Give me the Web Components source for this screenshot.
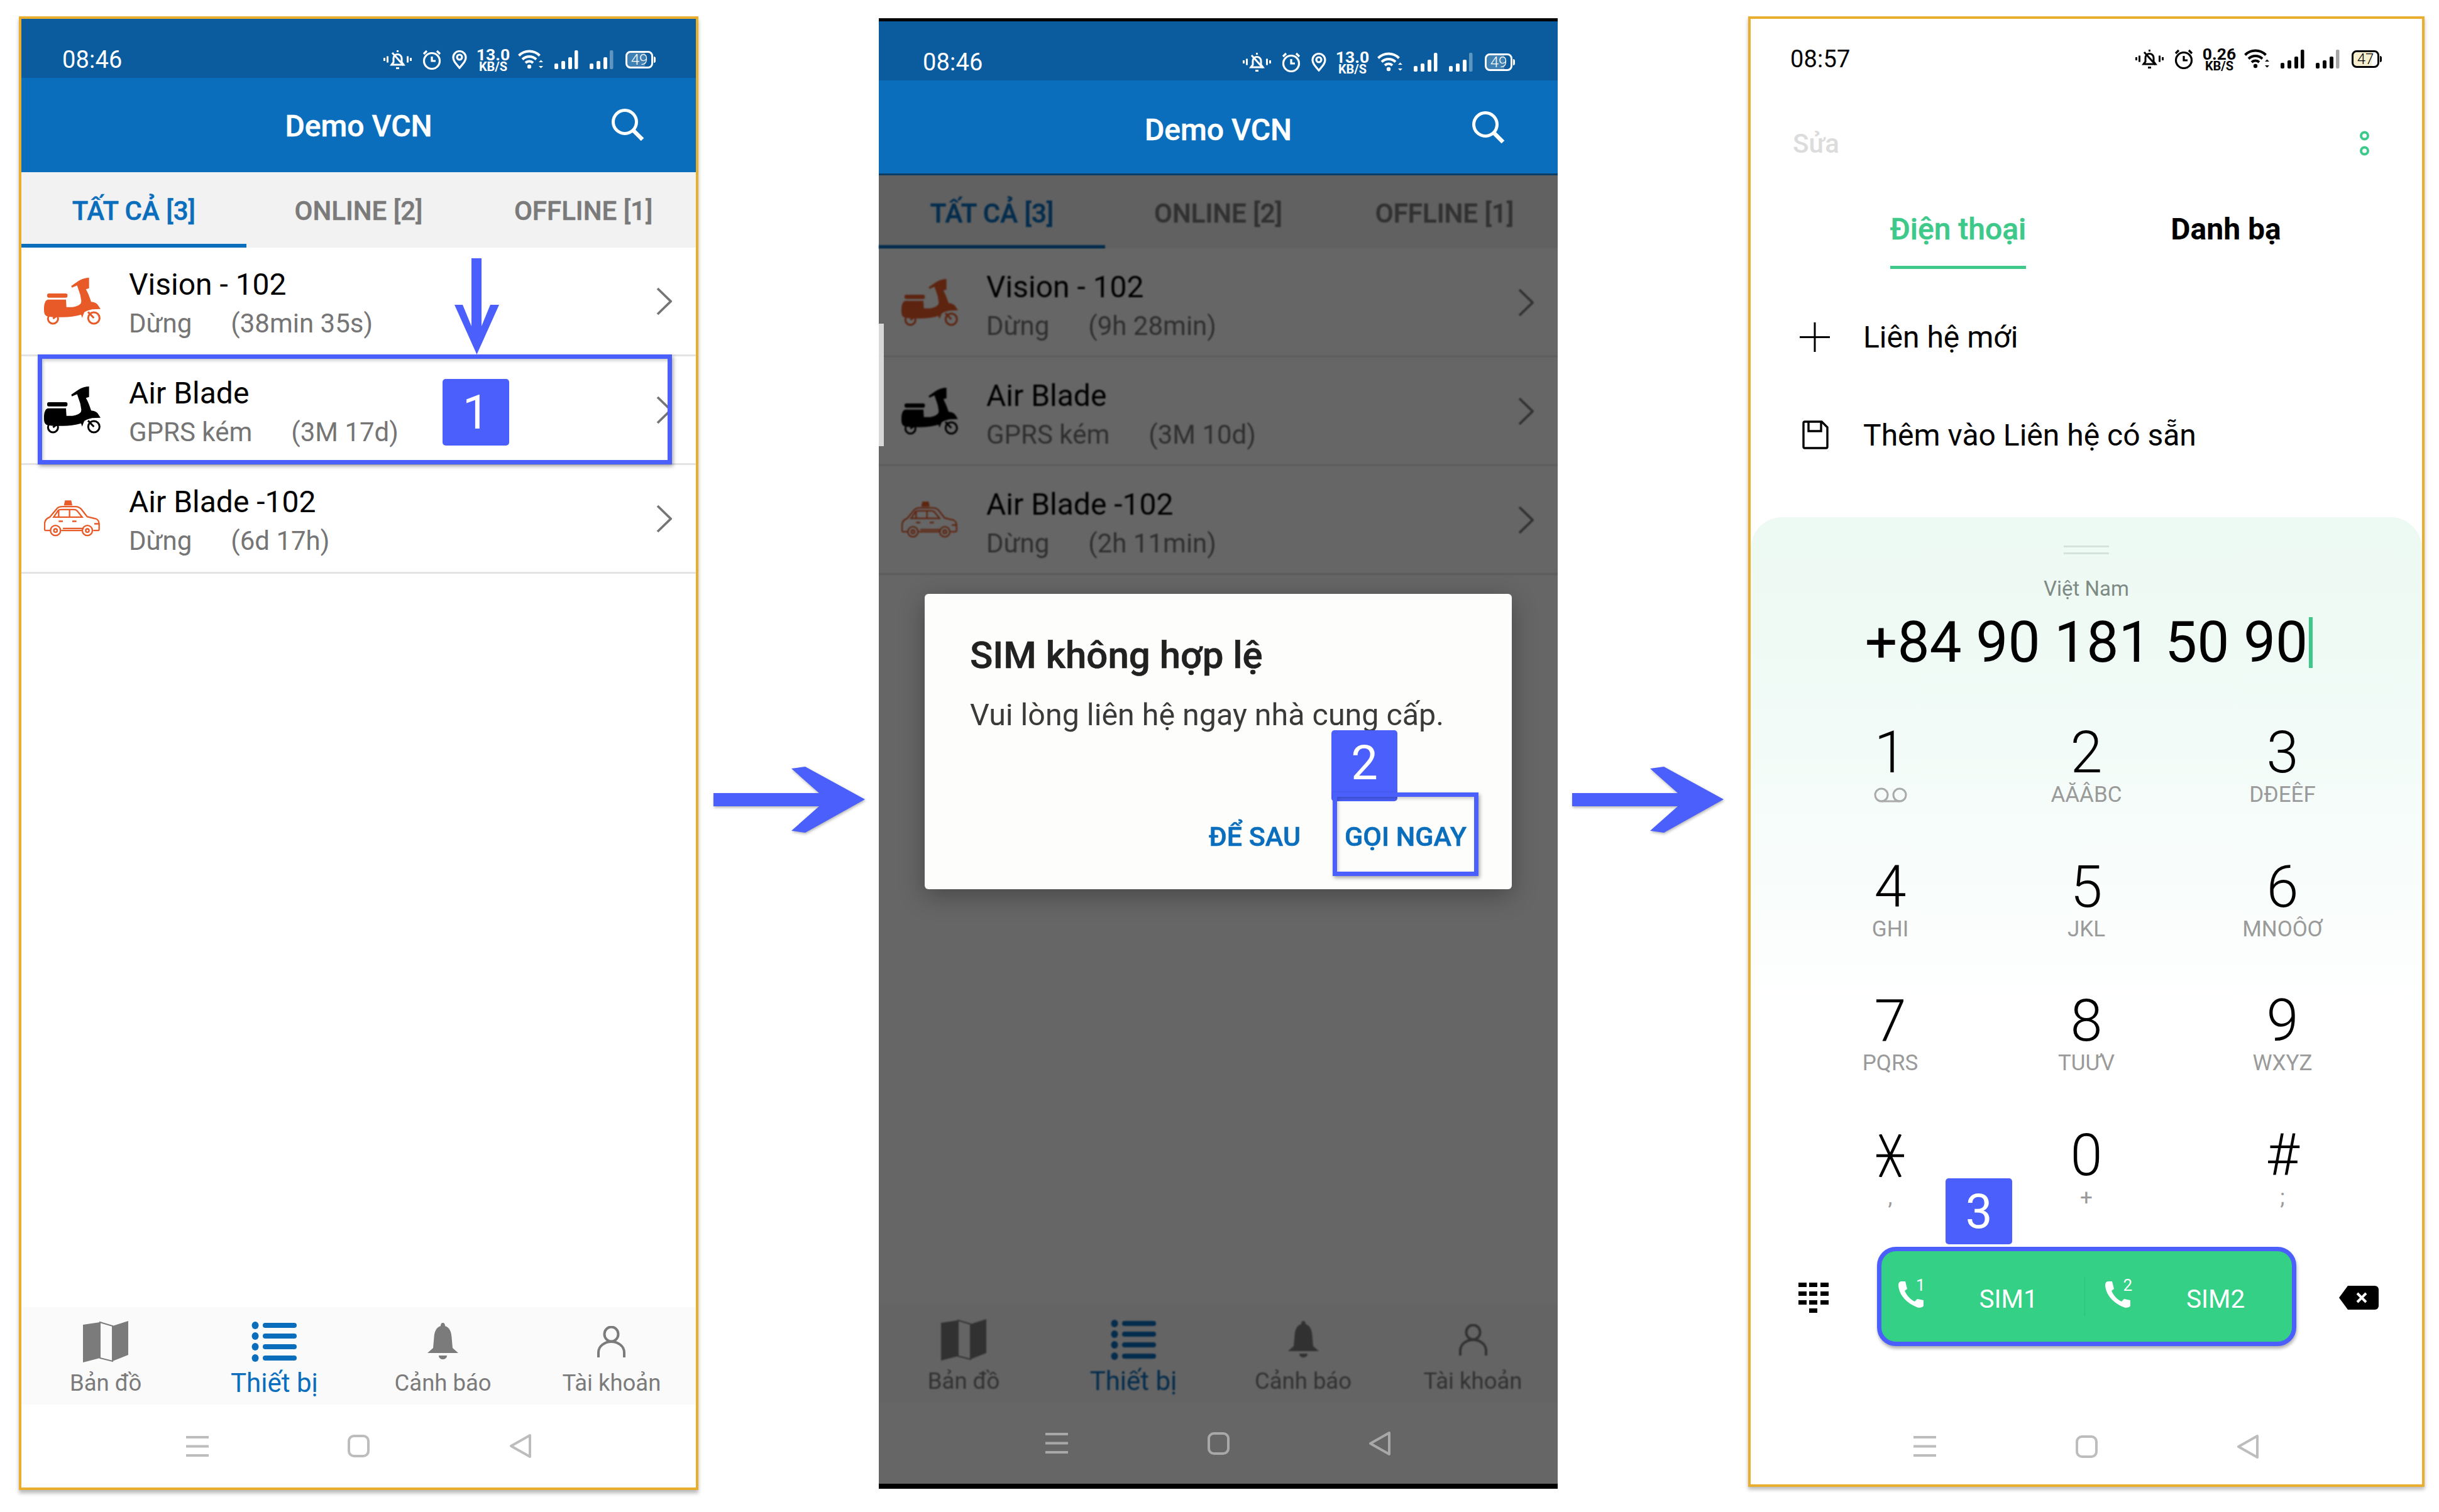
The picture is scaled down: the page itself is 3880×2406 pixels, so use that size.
<!DOCTYPE html>
<html lang="vi"><head><meta charset="utf-8"><title>Demo VCN</title>
<style>
html,body{margin:0;background:#fff}
body{width:3880px;height:2406px;overflow:hidden;font-family:Roboto,"Liberation Sans",sans-serif}
</style></head><body>
<guide-strip>
  <vehicle-screen time="08:46" speed="13.0" battery="49">
    <vehicle-row name="Vision - 102" state="Dừng" age="(38min 35s)" icon="scooter" tint="#e85a28"></vehicle-row>
    <vehicle-row name="Air Blade" state="GPRS kém" age="(3M 17d)" icon="scooter" tint="#000"></vehicle-row>
    <vehicle-row name="Air Blade -102" state="Dừng" age="(6d 17h)" icon="taxi" tint="#e85a28"></vehicle-row>
    <down-arrow slot="overlay" style="left:689px;top:381px"></down-arrow>
    <highlight-box slot="overlay" style="left:26px;top:534px;width:1009px;height:175px"></highlight-box>
    <step-badge slot="overlay" style="left:670px;top:573px;width:106px;height:106px">1</step-badge>
  </vehicle-screen>
  <flow-arrow style="margin:1194px 22px 0 24px"></flow-arrow>
  <vehicle-screen dimmed time="08:46" speed="13.0" battery="49">
    <vehicle-row name="Vision - 102" state="Dừng" age="(9h 28min)" icon="scooter" tint="#e85a28"></vehicle-row>
    <vehicle-row name="Air Blade" state="GPRS kém" age="(3M 10d)" icon="scooter" tint="#000"></vehicle-row>
    <vehicle-row name="Air Blade -102" state="Dừng" age="(2h 11min)" icon="taxi" tint="#e85a28"></vehicle-row>
    <alert-dialog slot="dialog" heading="SIM không hợp lệ" message="Vui lòng liên hệ ngay nhà cung cấp." later="ĐỂ SAU" now="GỌI NGAY"></alert-dialog>
    <step-badge slot="overlay" style="left:720px;top:1128px;width:105px;height:113px;padding-bottom:10px;box-sizing:border-box">2</step-badge>
    <highlight-box slot="overlay" style="left:722px;top:1227px;width:232px;height:133px"></highlight-box>
  </vehicle-screen>
  <flow-arrow style="margin:1194px 39px 0 23px"></flow-arrow>
  <dial-screen>
    <step-badge slot="overlay" style="left:310px;top:1845px;width:106px;height:105px">3</step-badge>
  </dial-screen>
</guide-strip>
<script>
const STROKE='fill="none" stroke="currentColor"';
const ICONS={
  bell:`<svg width="45" height="32" viewBox="0 0 45 32" ${STROKE} stroke-width="3"><path d="M13 24l3-4v-6a6.5 6.5 0 0 1 13 0v6l3 4z"/><path d="M20 29.500h5M22.500 1v3M14 5l18 20"/><path d="M1.500 13v5M6.500 10.500v10M38.500 10.500v10M43.500 13v5"/></svg>`,
  alarm:`<svg width="30" height="32" viewBox="0 0 30 32" ${STROKE} stroke-width="3.200"><circle cx="15" cy="18" r="12.500"/><path d="M15 11v7h6M2 7l5-5M23 2l5 5"/></svg>`,
  pin:`<svg width="24" height="30" viewBox="0 0 24 30" ${STROKE} stroke-width="3.200"><path d="M12 28C6 21 2 17 2 11.500a10 10 0 0 1 20 0C22 17 18 21 12 28z"/><circle cx="12" cy="11" r="4"/></svg>`,
  wifi:`<svg width="40" height="32" viewBox="0 0 40 32" ${STROKE} stroke-width="4"><path d="M1.500 9.500a23 23 0 0 1 33 0M7 15.500a16 16 0 0 1 22 0M12 21a8.500 8.500 0 0 1 12 0"/><circle cx="18" cy="27" r="3.200" fill="currentColor" stroke="none"/><path d="M33 20l3.500-3.500L40 20zM33 26l3.500 3.500L40 26z" fill="currentColor" stroke="none"/></svg>`,
  search:`<svg width="53" height="52" viewBox="0 0 53 52" fill="none" stroke="#fff"><circle cx="22" cy="22" r="18.500" stroke-width="5"/><path d="M35 35l15 15" stroke-width="6.500"/></svg>`,
  chevron:`<svg width="25" height="45" viewBox="0 0 25 45" fill="none" stroke="#757575" stroke-width="3.800"><path d="M2 2l21 20.500L2 43"/></svg>`,
  scooter:`<svg width="90" height="75" viewBox="90 125 270 225" fill="currentColor"><rect x="105" y="200" width="97" height="20" rx="8"/><path d="M90 265q2-32 18-36h87l2 36q25 2 43-3 30-8 28-27-3-30-14-55l-6-18-25 10-3-8 35-24q25-15 50-15v50l-15 5q12 20 25 60 20 2 30 12l15 22-40 2q-25 5-38 14l-10 26-5-15q-45 13-95 12-50 2-70-5-12-7-12-27z"/><g fill="none" stroke="currentColor"><circle cx="133" cy="320" r="24" stroke-width="9"/><circle cx="328" cy="317" r="27" stroke-width="9"/><path d="M300 288l28 29M133 320l18-14" stroke-width="9"/></g></svg>`,
  taxi:`<svg width="90" height="59" viewBox="90 1188 270 176" fill="none" stroke="currentColor" stroke-width="7"><path d="M185 1212l5-24h30l5 24z" fill="currentColor" stroke="none"/><path d="M120 1332h-22q-5 0-5-6v-28q2-22 25-30l30-36q8-14 30-14h60q22 0 33 16l25 32 42 10q14 6 15 24v26q0 6-8 6h-20M172 1332h98"/><path d="M136 1268l22-32q4-4 14-4h62q8 0 14 6l24 30zM160 1232v36M212 1232v36M160 1288h20M225 1288h20M180 1322h100M330 1300h25"/><circle cx="145" cy="1332" r="24"/><circle cx="145" cy="1332" r="8"/><circle cx="297" cy="1332" r="24"/><circle cx="297" cy="1332" r="8"/></svg>`,
  map:`<svg width="72" height="66" viewBox="0 0 72 66" fill="currentColor"><path d="M0 6l27-4v57L0 66zM47 8L72 0v54L47 64z"/><path d="M27 2l20 6v56l-20-5z" fill="none" stroke="currentColor" stroke-width="2"/></svg>`,
  list:`<svg width="72" height="64" viewBox="0 0 72 64" fill="currentColor"><ellipse cx="6" cy="6" rx="5.500" ry="6"/><ellipse cx="6" cy="23" rx="5.500" ry="6"/><ellipse cx="6" cy="40" rx="5.500" ry="6"/><ellipse cx="6" cy="58" rx="5.500" ry="6"/><rect x="18" y="2" width="54" height="8" rx="4"/><rect x="18" y="19" width="54" height="8" rx="4"/><rect x="18" y="36" width="54" height="8" rx="4"/><rect x="18" y="54" width="54" height="8" rx="4"/></svg>`,
  alert:`<svg width="49" height="60" viewBox="0 0 49 60" fill="currentColor"><path d="M24.500 0c2.500 0 3.500 2 3.500 5 7 2 10 9 10.500 18l1.500 17 9 8H0l9-8 1.500-17c.5-9 3.500-16 10.500-18 0-3 1-5 3.500-5zM18 52h13c0 8-13 8-13 0z"/></svg>`,
  person:`<svg width="45" height="50" viewBox="0 0 45 50" ${STROKE} stroke-width="4"><ellipse cx="22.500" cy="13" rx="11" ry="11.500"/><path d="M2 50v-8c0-10 10-17 20.500-17S43 32 43 42v8"/></svg>`,
  star:`<svg width="44" height="68" viewBox="0 0 44 68" ${STROKE} stroke-width="4.500"><path d="M6 0l32 68M38 0L6 68M0 34h44"/></svg>`,
  voicemail:`<svg width="53" height="24" viewBox="0 0 53 24" fill="none" stroke="#aaa" stroke-width="3"><circle cx="12" cy="12" r="10"/><circle cx="41" cy="12" r="10"/><path d="M12 22h29"/></svg>`,
  plus:`<svg width="48" height="47" viewBox="0 0 48 47" fill="none" stroke="#000" stroke-width="3"><path d="M24 0v47M0 23.500h48"/></svg>`,
  save:`<svg width="43" height="46" viewBox="0 0 43 46" fill="none" stroke="#000" stroke-width="3.400"><path d="M3 4q0-2 2-2h27l9 9v31q0 2-2 2H5q-2 0-2-2z"/><path d="M11 2v15h20V2"/></svg>`,
  phone:`<svg width="43" height="43" viewBox="0 0 43 43" fill="#fff"><path d="M1 7C2 24 16 37 33 43c4 0 7-1 8-3v-9l-10-2-4 4C20 30 14 23 11 16l4-3-3-12H5Q1 2 1 7z"/></svg>`,
  pad:`<svg width="48" height="48" viewBox="0 0 48 48" fill="#000"><path d="M0 0h13v7H0zM17 0h13v7H17zM35 0h13v7H35zM0 14h13v7H0zM17 14h13v7H17zM35 14h13v7H35zM0 28h13v7H0zM17 28h13v7H17zM35 28h13v7H35zM17 41h13v7H17z"/></svg>`,
  erase:`<svg width="63" height="38" viewBox="0 0 63 38"><path d="M14 0h43a6 6 0 0 1 6 6v26a6 6 0 0 1-6 6H14L0 19z" fill="#000"/><path d="M29 12l14 14M43 12L29 26" stroke="#fff" stroke-width="4"/></svg>`
};
function signal(lastOpacity){
  return `<svg width="38" height="30" viewBox="0 0 38 30" fill="currentColor"><rect x="0" y="21" width="6" height="9" rx="2"/><rect x="11" y="17" width="6" height="13" rx="2"/><rect x="22" y="11" width="6" height="19" rx="2"/><rect x="32" y="0" width="5.500" height="30" rx="2" opacity="${lastOpacity}"/></svg>`;
}
class Base extends HTMLElement{
  constructor(){super();this.attachShadow({mode:'open'});}
  connectedCallback(){this.shadowRoot.innerHTML=this.view();}
  a(n){return this.getAttribute(n)||'';}
}
const def=(n,c)=>customElements.define(n,c);

def('guide-strip',class extends Base{view(){return `<style>:host{display:flex;align-items:flex-start;width:3880px;height:2406px;box-sizing:border-box;padding:26px 0 0 30px;color:#000}</style><slot></slot>`}});

def('flow-arrow',class extends Base{view(){return `<style>:host{display:block;flex:none;width:241px;height:105px}svg{display:block;filter:drop-shadow(1px 2px 2px rgba(0,0,0,.3))}</style>
<svg width="241" height="105" viewBox="0 0 241 105" fill="#4a5ffb"><path d="M0 42h168L124 3l22-3 95 52-95 53-22-3 44-39H0z"/></svg>`}});

def('down-arrow',class extends Base{view(){return `<style>:host{position:absolute;z-index:5;width:71px;height:153px}svg{display:block}</style>
<svg width="71" height="153" viewBox="0 0 71 153" fill="#4a5ffb"><path d="M27 0h16v108l14-34h14l-35.500 79L0 74h13l14 34z"/></svg>`}});

def('highlight-box',class extends Base{view(){return `<style>:host{position:absolute;z-index:6;box-sizing:border-box;border:7px solid #4a5ffb;box-shadow:2px 3px 6px rgba(0,0,0,.35),inset 2px 3px 5px rgba(0,0,0,.2)}</style>`}});

def('step-badge',class extends Base{view(){return `<style>:host{position:absolute;z-index:5;display:flex;align-items:center;justify-content:center;background:#4a5ffb;color:#fff;border-radius:5px;font:400 76px/1 Roboto,sans-serif}</style><slot></slot>`}});

def('status-bar',class extends Base{view(){
  const pin=this.hasAttribute('pin');
  return `<style>
  :host{display:flex;align-items:center;flex:none;height:94px;box-sizing:border-box;padding:var(--status-top,36px) var(--status-right,68px) 0 var(--status-left,65px);font:400 38px/1 Roboto,sans-serif;color:var(--status,#fff)}
  .t{flex:1;letter-spacing:.2px}
  .i{display:flex;align-items:center}
  svg{display:block;flex:none}
  .sp{display:flex;flex-direction:column;align-items:center;font-weight:700;width:49px;margin:0 15px 0 17px;font-size:26.500px;line-height:23px}
  .sp b{font-size:20px;line-height:17px;font-weight:700}
  .bat{position:relative;width:44px;height:28px;box-sizing:border-box;border:3px solid currentColor;border-radius:8px;margin-left:19px;display:flex;align-items:center;justify-content:center;font-size:24px;font-weight:300;background:linear-gradient(90deg,var(--fill,rgba(255,255,255,.22)) 75%,transparent 75%)}
  .bat:after{content:"";position:absolute;right:-7px;top:6px;width:3px;height:10px;background:currentColor;border-radius:0 3px 3px 0}
  </style>
  <span class="t">${this.a('time')}</span>
  <span class="i">${ICONS.bell}<span style="width:17px"></span>${ICONS.alarm}${pin?`<span style="width:17px"></span>${ICONS.pin}`:''}
  <span class="sp">${this.a('speed')}<b>KB/S</b></span>${ICONS.wifi}<span style="width:18px"></span>${signal(1)}<span style="width:18px"></span>${signal(.35)}
  <span class="bat">${this.a('battery')}</span></span>`}});

def('tab-strip',class extends Base{view(){
  return `<style>:host{display:grid;grid-template-columns:repeat(3,1fr);flex:none;height:120px;background:#f2f2f2;font:500 42px/1 Roboto,sans-serif;color:#7a7a7a;-webkit-text-stroke:.5px currentColor;filter:var(--soft,none)}
  div{display:flex;align-items:center;justify-content:center;padding-top:var(--label-shift,4px);box-sizing:border-box}
  .on{color:#0a6ebd;box-shadow:inset 0 -6px #0a6ebd}</style>`+
  this.a('labels').split('|').map((l,i)=>`<div class="${i?'':'on'}">${l}</div>`).join('')}});

def('vehicle-row',class extends Base{view(){return `<style>
  :host{display:flex;align-items:center;height:173px;box-sizing:border-box;padding:0 38px 0 36px;border-bottom:3px solid #e3e3e3;background:#fff;font-family:Roboto,sans-serif;filter:var(--soft,none)}
  .ic{flex:none;width:90px;height:80px;display:flex;align-items:center;color:${this.a('tint')}}
  svg{display:block}
  .tx{flex:1;margin-left:45px;margin-top:var(--text-shift,4px);display:flex;flex-direction:column;gap:7px}
  .n{font-size:48px;line-height:60px;color:#000}
  .s{font-size:42px;line-height:50px;color:#757575;display:flex}
  .s span+span{margin-left:62px}
  </style><span class="ic">${ICONS[this.a('icon')]}</span>
  <span class="tx"><span class="n">${this.a('name')}</span><span class="s"><span>${this.a('state')}</span><span>${this.a('age')}</span></span></span>${ICONS.chevron}`}});

def('nav-item',class extends Base{view(){const on=this.hasAttribute('active');return `<style>
  :host{display:flex;flex-direction:column;align-items:center;color:${on?'#0a6ebd':'#7b7b7b'};font-family:Roboto,sans-serif}
  .i{height:80px;display:flex;align-items:center}svg{display:block}
  .l{font-size:${on?42:36.5}px;line-height:50px;margin-top:1px;white-space:nowrap}</style>
  <span class="i">${ICONS[this.a('icon')]}</span><span class="l">${this.a('label')}</span>`}});

def('bottom-nav',class extends Base{view(){return `<style>:host{display:grid;grid-template-columns:repeat(4,1fr);flex:none;height:155px;box-sizing:border-box;padding-top:15px;background:#fafafa;filter:var(--soft,none)}</style><slot></slot>`}});

def('sys-nav',class extends Base{view(){const c=this.a('tone')||'#bdbdbd';return `<style>
  :host{display:grid;grid-template-columns:repeat(3,257px);justify-content:center;justify-items:center;align-items:center;flex:none;height:var(--sys-height,132px)}
  svg{display:block}</style>
  <svg width="36" height="33" viewBox="0 0 36 33" fill="${c}"><path d="M0 0h36v4H0zM0 14.500h36v4H0zM0 29h36v4H0z"/></svg>
  <svg width="35" height="36" viewBox="0 0 35 36" fill="none" stroke="${c}" stroke-width="4"><rect x="2" y="2" width="31" height="32" rx="8"/></svg>
  <svg width="36" height="40" viewBox="0 0 36 40" fill="none" stroke="${c}" stroke-width="4" stroke-linejoin="round"><path d="M33 3v34L3 20z"/></svg>`}});

def('alert-dialog',class extends Base{view(){return `<style>
  :host{display:block;width:934px;height:470px;box-sizing:border-box;padding:63px 72px 0;background:#fdfefc;border-radius:6px;box-shadow:0 10px 40px rgba(0,0,0,.3);font-family:Roboto,sans-serif;filter:blur(.7px)}
  .h{font-size:60px;line-height:70px;font-weight:500;color:#212121;-webkit-text-stroke:.6px currentColor}
  .m{font-size:48.400px;line-height:60px;margin-top:30px;color:#3a3a3a;white-space:nowrap}
  .a{display:flex;justify-content:flex-end;gap:70px;margin-top:138px;font-size:43px;line-height:50px;font-weight:500;color:#0a6ebd;-webkit-text-stroke:.6px currentColor}</style>
  <div class="h">${this.a('heading')}</div><div class="m">${this.a('message')}</div>
  <div class="a"><span>${this.a('later')}</span><span>${this.a('now')}</span></div>`}});

def('vehicle-screen',class extends Base{view(){const dim=this.hasAttribute('dimmed');return `<style>
  :host{position:relative;flex:none;display:flex;flex-direction:column;box-sizing:border-box;background:#fff;
    ${dim?'--soft:blur(.9px);--status-left:70px;--status-right:72px;--sys-height:129px;--label-shift:8px;--text-shift:8px;width:1080px;height:2340px;margin-top:3px;border-top:5px solid #000;border-bottom:8px solid #000;':'width:1081px;height:2345px;border:4px solid #e9ae2e;box-shadow:0 5px 6px rgba(0,0,0,.28);'}}
  status-bar{background:#0b5c9e}
  .bar{position:relative;flex:none;height:${dim?148:150}px;box-sizing:border-box;padding-top:${dim?9:4}px;background:#0a6ebd;color:#fff;display:flex;align-items:center;justify-content:center;font:500 48px/1 Roboto,sans-serif;-webkit-text-stroke:.5px #fff;${dim?'box-shadow:0 3px 0 #0a3d66;':''}}
  .bar svg{position:absolute;right:${dim?84:82}px;top:48px}
  status-bar,.bar,sys-nav{z-index:3}
  .fill{flex:1}
  ${dim?'.scroll{position:absolute;left:0;top:481px;width:8px;height:195px;background:#d8d8d8;z-index:3}':''}
  .scrim{position:absolute;left:0;right:0;top:243px;bottom:0;z-index:2;background:rgba(0,0,0,.6);display:flex;justify-content:center;align-items:flex-start;padding-top:668px;box-sizing:border-box}
  </style>
  <status-bar time="${this.a('time')}" speed="${this.a('speed')}" battery="${this.a('battery')}" pin></status-bar>
  <div class="bar">Demo VCN${ICONS.search}</div>
  <tab-strip labels="TẤT CẢ [3]|ONLINE [2]|OFFLINE [1]"></tab-strip>
  <slot></slot>
  <div class="fill"></div>
  <bottom-nav>
    <nav-item icon="map" label="Bản đồ"></nav-item>
    <nav-item icon="list" label="Thiết bị" active></nav-item>
    <nav-item icon="alert" label="Cảnh báo"></nav-item>
    <nav-item icon="person" label="Tài khoản"></nav-item>
  </bottom-nav>
  <sys-nav${dim?' tone="#a8a8a8"':''}></sys-nav>
  ${dim?'<div class="scrim"><slot name="dialog"></slot></div><div class="scroll"></div>':''}
  <slot name="overlay"></slot>`}});

def('dial-key',class extends Base{view(){return `<style>
  :host{display:flex;flex-direction:column;align-items:center;font-family:Roboto,sans-serif}
  .d{height:100px;display:flex;align-items:center;justify-content:center;font-size:92px;font-weight:300;line-height:100px;color:#000}
  .l{height:34px;display:flex;align-items:center;font-size:35px;line-height:34px;color:#9a9a9a;white-space:nowrap}
  svg{display:block}</style>
  <span class="d">${this.a('icon')?ICONS[this.a('icon')]:this.a('digit')}</span>
  <span class="l">${this.a('sub')?ICONS[this.a('sub')]:this.a('letters')}</span>`}});

def('call-button',class extends Base{view(){
  const half=(n,pad)=>`<span class="h" style="padding-left:${pad}px"><span class="p">${ICONS.phone}<i>${n}</i></span><span class="s" style="margin-left:87px">SIM${n}</span></span>`;
  return `<style>
  :host{display:flex;align-items:center;position:relative;box-sizing:border-box;height:158px;background:#34d086;border:7px solid #4a5ffb;border-radius:30px;box-shadow:1px 4px 5px rgba(0,0,0,.3);color:#fff;font:400 40.500px/1 Roboto,sans-serif}
  .h{flex:1;display:flex;align-items:center;box-sizing:border-box}
  .s{position:relative;top:5px}
  .p{position:relative;width:43px;height:43px;flex:none;top:-3px}.p svg{display:block}
  i{position:absolute;right:-1px;top:-6px;font:400 26px/1 Roboto,sans-serif}
  .d{width:1px;height:62px;background:rgba(0,0,0,.08);flex:none}
  </style>${half(1,26)}<span class="d"></span>${half(2,31)}`}});

def('dial-screen',class extends Base{view(){return `<style>
  :host{--status:#000;--fill:#f5efcf;--status-top:34px;--status-left:63px;--status-right:68px;--sys-height:122px;position:relative;flex:none;display:flex;flex-direction:column;box-sizing:border-box;width:1076px;height:2340px;background:#fff;border:4px solid #e9ae2e;box-shadow:0 4px 6px rgba(0,0,0,.28);font-family:Roboto,sans-serif}
  svg{display:block}
  .tool{flex:none;display:flex;align-items:center;justify-content:space-between;height:100px;margin-top:54px;padding:0 84px 0 67px;font-size:42px;font-weight:500;color:#dcdcdc}
  .tabs{flex:none;display:grid;grid-template-columns:426px 426px;justify-content:center;justify-items:center;padding:57px 0 0 18px;font-size:48px;line-height:60px}
  .tabs span{box-sizing:border-box;height:93px}
  .tabs .on{color:#3ec98a;font-weight:500;border-bottom:5px solid #3ec98a;-webkit-text-stroke:.5px currentColor}
  .tabs .off{font-weight:700;font-size:48px}
  .row{flex:none;display:flex;align-items:center;height:156px;padding-left:78px;font-size:48px}
  .row span{width:48px;display:flex;justify-content:center;margin-right:53px}
  .pane{flex:1;min-height:0;display:flex;flex-direction:column;margin-top:53px;padding-top:45px;border-radius:50px 50px 0 0;background:linear-gradient(#edf9f3,#f2fbf7 350px,#fff 800px)}
  .hd{flex:none;align-self:center;width:72px;height:14px;box-sizing:border-box;border-top:3px solid #d3e2db;border-bottom:3px solid #d3e2db}
  .cn{flex:none;text-align:center;font-size:33px;line-height:40px;color:#7e8a84;margin-top:35px}
  .num{flex:none;display:flex;justify-content:center;align-items:center;font-size:91px;line-height:90px;height:90px;margin-top:20px}
  .num i{display:block;width:6px;height:81px;margin-left:2px;margin-right:-8px;background:#3ec98a}
  .keys{flex:none;display:grid;grid-template-columns:repeat(3,312px);justify-content:center;grid-auto-rows:134px;row-gap:79.500px;margin-top:81px}
  .call{flex:none;display:grid;grid-template-columns:1fr 667px 1fr;justify-items:center;align-items:center;margin-top:61px}
  .call svg{position:relative;top:2px}
  call-button{justify-self:stretch}
  sys-nav{margin-top:99px}
  </style>
  <status-bar time="08:57" speed="0.26" battery="47"></status-bar>
  <div class="tool">Sửa<svg width="15" height="40" viewBox="0 0 15 40" fill="none" stroke="#3ec98a" stroke-width="4"><circle cx="7.500" cy="8" r="5.500"/><circle cx="7.500" cy="32" r="5.500"/></svg></div>
  <div class="tabs"><span class="on">Điện thoại</span><span class="off">Danh bạ</span></div>
  <div class="row" style="margin-top:30px"><span>${ICONS.plus}</span>Liên hệ mới</div>
  <div class="row"><span>${ICONS.save}</span>Thêm vào Liên hệ có sẵn</div>
  <div class="pane">
    <div class="hd"></div>
    <div class="cn">Việt Nam</div>
    <div class="num">+84 90 181 50 90<i></i></div>
    <div class="keys">
      <dial-key digit="1" sub="voicemail"></dial-key><dial-key digit="2" letters="AĂÂBC"></dial-key><dial-key digit="3" letters="DĐEÊF"></dial-key>
      <dial-key digit="4" letters="GHI"></dial-key><dial-key digit="5" letters="JKL"></dial-key><dial-key digit="6" letters="MNOÔƠ"></dial-key>
      <dial-key digit="7" letters="PQRS"></dial-key><dial-key digit="8" letters="TUƯV"></dial-key><dial-key digit="9" letters="WXYZ"></dial-key>
      <dial-key icon="star" letters=","></dial-key><dial-key digit="0" letters="+"></dial-key><dial-key digit="#" letters=";"></dial-key>
    </div>
    <div class="call">${ICONS.pad}<call-button></call-button>${ICONS.erase}</div>
    <sys-nav></sys-nav>
  </div>
  <slot name="overlay"></slot>`}});
</script>
</body></html>
